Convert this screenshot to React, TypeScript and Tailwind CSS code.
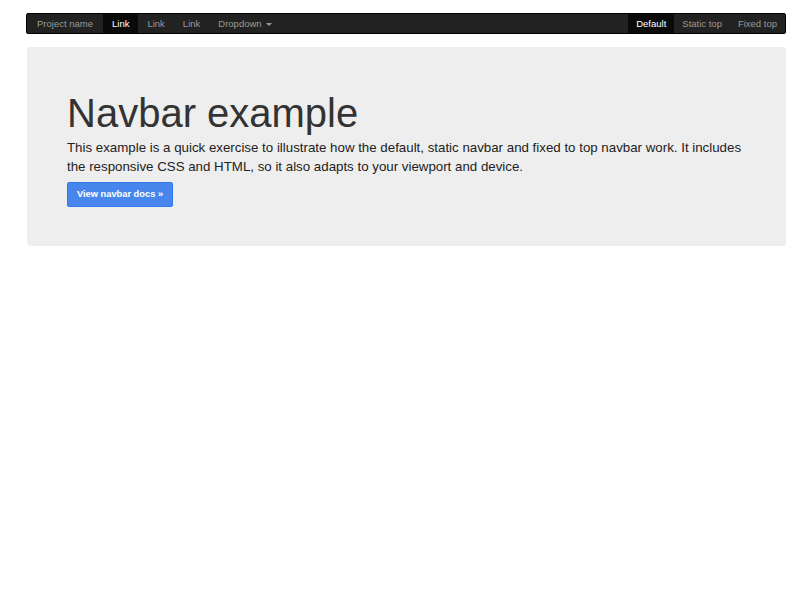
const leftLinks = [
  { label: "Link", active: true },
  { label: "Link", active: false },
  { label: "Link", active: false },
];

const rightLinks = [
  { label: "Default", active: true },
  { label: "Static top", active: false },
  { label: "Fixed top", active: false },
];

export default function App() {
  return (
    <div className="min-h-[600px] bg-white pt-[13px] font-['Liberation_Sans',Arial,sans-serif]">
      <nav className="ml-[26px] flex h-[21px] w-[760px] items-stretch rounded-[2px] border border-black bg-[#222] text-[9.5px] leading-[19px] text-[#999]">
        <span className="pl-[10px] pr-[10px]">Project name</span>
        {leftLinks.map((link, i) => (
          <span
            key={i}
            className={
              link.active
                ? "bg-[#0a0a0a] px-[9px] text-white"
                : "px-[9px]"
            }
          >
            {link.label}
          </span>
        ))}
        <span className="flex items-center gap-[4px] px-[9px]">
          Dropdown
          <span className="mt-[1px] h-0 w-0 border-x-[3px] border-t-[3px] border-x-transparent border-t-[#999]" />
        </span>
        <div className="ml-auto flex">
          {rightLinks.map((link) => (
            <span
              key={link.label}
              className={
                link.active
                  ? "bg-[#0a0a0a] px-[8px] text-white"
                  : "px-[8px]"
              }
            >
              {link.label}
            </span>
          ))}
        </div>
      </nav>

      <section className="ml-[27px] mt-[13px] h-[199px] w-[759px] rounded-[3px] bg-[#eee] px-[40px] pt-[44px] text-[#333]">
        <h1 className="text-[40px] leading-[44px]">Navbar example</h1>
        <p className="mt-[3px] text-[13.3px] leading-[19px] text-[#222]">
          This example is a quick exercise to illustrate how the default, static navbar and fixed to top navbar work. It includes the responsive CSS and HTML, so it also adapts to your viewport and device.
        </p>
        <button className="mt-[6px] h-[25px] w-[106px] rounded-[2px] border border-[#3079ed] bg-[#4787ed] text-[9.3px] font-bold text-white">
          View navbar docs »
        </button>
      </section>
    </div>
  );
}
